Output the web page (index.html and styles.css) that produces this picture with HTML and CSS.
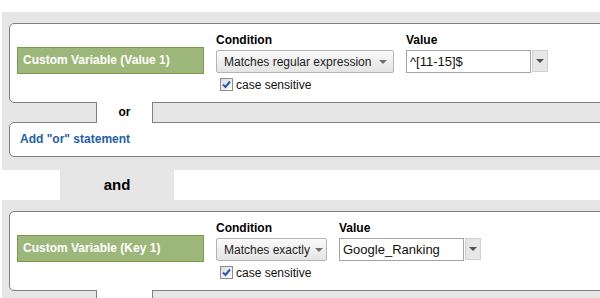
FILE: index.html
```html
<!DOCTYPE html>
<html lang="en">
  <head>
    <meta charset="UTF-8" />
    <title>Advanced Segment - Conditions</title>
    <link rel="stylesheet" href="styles.css">
  </head>
  <body>
    <div class="group">
      <div class="card">
        <div class="row">
          <div class="dimension">Custom Variable (Value 1)</div>
          <div class="field">
            <div class="field-label">Condition</div>
            <div class="select select-wide">
              <span>Matches regular expression</span>
              <span class="caret"></span>
            </div>
            <label class="check">
              <span class="box">
                <svg width="9" height="9" viewBox="0 0 9 9"><path d="M1 4.5 L3.5 7 L8 1.5" fill="none" stroke="#2a57b5" stroke-width="2"/></svg>
              </span>
              case sensitive
            </label>
          </div>
          <div class="field">
            <div class="field-label">Value</div>
            <div class="combo">
              <div class="input">^[11-15]$</div>
              <div class="drop"><span class="caret dark"></span></div>
            </div>
          </div>
        </div>
      </div>
      <div class="link-or">or</div>
      <div class="card card-add">
        <a class="add-or" href="#">Add "or" statement</a>
      </div>
    </div>

    <div class="and-tab">and</div>

    <div class="group group-last">
      <div class="card">
        <div class="row">
          <div class="dimension">Custom Variable (Key 1)</div>
          <div class="field">
            <div class="field-label">Condition</div>
            <div class="select select-short">
              <span>Matches exactly</span>
              <span class="caret"></span>
            </div>
            <label class="check">
              <span class="box">
                <svg width="9" height="9" viewBox="0 0 9 9"><path d="M1 4.5 L3.5 7 L8 1.5" fill="none" stroke="#2a57b5" stroke-width="2"/></svg>
              </span>
              case sensitive
            </label>
          </div>
          <div class="field">
            <div class="field-label">Value</div>
            <div class="combo">
              <div class="input">Google_Ranking</div>
              <div class="drop"><span class="caret dark"></span></div>
            </div>
          </div>
        </div>
      </div>
      <!-- only the top of the next bridge is in view -->
      <div class="link-or link-stub"></div>
    </div>
  </body>
</html>
```

FILE: styles.css
```css
* {
  margin: 0;
  padding: 0;
  box-sizing: border-box;
}

body {
  font-family: "Liberation Sans", Arial, sans-serif;
  font-size: 12px;
  color: #000;
  background: #fff;
  padding-top: 12px;
  overflow: hidden;
}

/* Gray block holding one condition and its "or" list */
.group {
  background: #e6e6e6;
  margin-left: 2px;
  margin-right: -40px;
  padding: 11px 0 13px 7px;
}

.group-last {
  padding-bottom: 0;
}

.card {
  background: #fff;
  border: 1px solid #808080;
  border-radius: 5px;
  padding: 9px 7px 11px;
}

.row {
  display: flex;
  align-items: flex-start;
  gap: 12px;
}

.dimension {
  width: 187px;
  height: 27px;
  margin-top: 14px;
  background: #9db67a;
  border: 1px solid #7a9a4c;
  color: #fff;
  font-weight: bold;
  line-height: 25px;
  padding-left: 5px;
  white-space: nowrap;
}

.field {
  display: flex;
  flex-direction: column;
}

.field-label {
  font-weight: bold;
  line-height: 14px;
  margin-bottom: 3px;
}

.select {
  height: 23px;
  display: flex;
  align-items: center;
  justify-content: space-between;
  padding: 0 6px 0 7px;
  border: 1px solid #b4b4b4;
  border-radius: 2px;
  background: linear-gradient(#fafafa, #e4e4e4);
  color: #222;
  white-space: nowrap;
}

.select-wide {
  width: 178px;
}

.select-short {
  width: 111px;
}

.caret {
  width: 0;
  height: 0;
  border-left: 4px solid transparent;
  border-right: 4px solid transparent;
  border-top: 4px solid #707070;
  margin-left: 5px;
}

.caret.dark {
  border-top-color: #505050;
  margin: 0;
}

.check {
  display: flex;
  align-items: center;
  gap: 3px;
  margin-top: 5px;
  padding-left: 4px;
  height: 13px;
  color: #111;
}

.box {
  width: 13px;
  height: 13px;
  border: 1px solid #8c8c8c;
  background: linear-gradient(135deg, #dcdcdc, #fff);
  display: flex;
  align-items: center;
  justify-content: center;
}

.combo {
  display: flex;
  gap: 1px;
}

.input {
  width: 125px;
  height: 23px;
  border: 1px solid #a5a5a5;
  background: #fff;
  padding-left: 3px;
  line-height: 21px;
  font-size: 13px;
  color: #111;
}

.drop {
  width: 16px;
  height: 22px;
  background: #e6e6e6;
  border: 1px solid #d0d0d0;
  display: flex;
  align-items: center;
  justify-content: center;
}

/* white bridge between a condition and the "or" card */
.link-or {
  position: relative;
  z-index: 1;
  width: 57px;
  height: 21px;
  margin: -1px 0 -1px 87px;
  background: #fff;
  border-left: 1px solid #808080;
  border-right: 1px solid #808080;
  text-align: center;
  font-weight: bold;
  line-height: 21px;
}

.link-stub {
  height: 10px;
  margin-bottom: 0;
}

.card-add {
  height: 35px;
  padding: 0 10px;
  line-height: 33px;
}

.add-or {
  color: #1f60a8;
  font-weight: bold;
  text-decoration: none;
}

.and-tab {
  width: 114px;
  height: 30px;
  margin-left: 60px;
  background: #e6e6e6;
  text-align: center;
  font-size: 15px;
  font-weight: bold;
  line-height: 30px;
}
```
